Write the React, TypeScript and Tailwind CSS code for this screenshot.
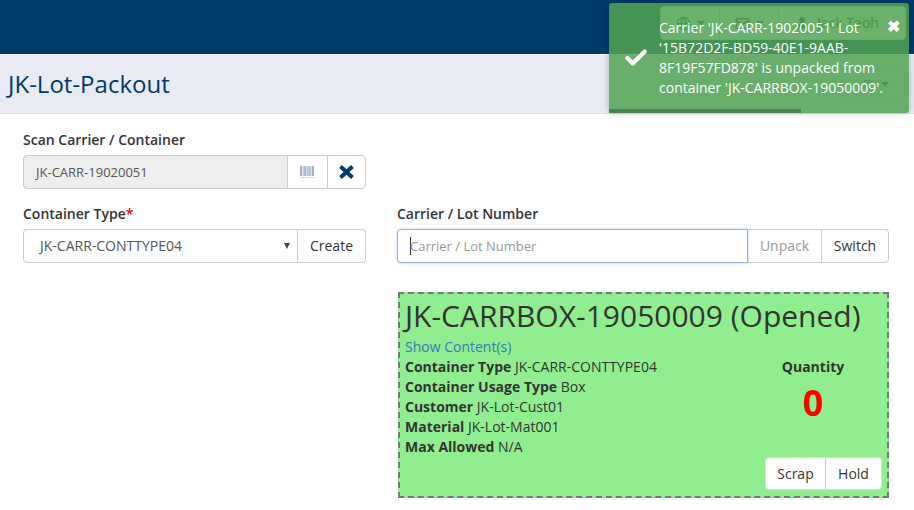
import { Check, Globe, Mail, Users, User } from "lucide-react";

function Row({ k, v }: { k: string; v: string }) {
  return (
    <div className="h-5 leading-5 text-sm">
      <b className="font-bold">{k}</b> {v}
    </div>
  );
}

function Caret() {
  return <span className="inline-block w-0 h-0 border-x-4 border-x-transparent border-t-4 border-t-[#333]" />;
}

export default function App() {
  return (
    <div className="relative w-[914px] h-[510px] overflow-hidden bg-white text-[#333] font-['Open_Sans',sans-serif]">
      <header className="h-[55px] bg-[#003a6b] border-b border-white flex justify-end items-start pt-[6px] pr-[8px]">
        <div className="flex h-[34px] w-[246px] rounded border border-[#ddd] bg-white text-[#333] text-sm">
          <div className="w-[59px] flex items-center justify-center gap-1.5 border-r border-[#ccc]">
            <Globe size={15} className="text-[#0a5a8a]" />
            <Caret />
          </div>
          <div className="w-[59px] flex items-center justify-center gap-1.5 border-r border-[#ccc]">
            <Mail size={15} />
            <Caret />
          </div>
          <div className="flex-1 flex items-center justify-center gap-2 pl-[6px]">
            <User size={14} fill="currentColor" />
            <span>Jack Teoh</span>
            <Caret />
          </div>
        </div>
      </header>
      <div className="h-[59px] bg-[#e8ebf3] border-b border-[#dde0e6] flex items-center justify-between pl-[8px] pr-[9px]">
        <h1 className="text-2xl text-[#003a6b] leading-none">JK-Lot-Packout</h1>
        <div className="w-[60px] h-[33px] rounded border border-[#ccc] flex items-center justify-center gap-2">
          <Users size={11} />
          <Caret />
        </div>
      </div>

      <main className="pl-[23px] pr-[25px] pt-[16px]">
        <label className="block text-sm font-semibold h-5 leading-5 mb-[5px]">Scan Carrier / Container</label>
        <div className="flex w-[343px] h-[34px] text-[13px]">
          <div className="flex-1 flex items-center pl-3 pt-px bg-[#eee] border border-[#ccc] rounded-l text-[#555]">JK-CARR-19020051</div>
          <div className="w-[39px] flex items-center justify-center border-y border-[#ccc]">
            <svg width="15" height="12" viewBox="0 0 15 12" fill="#a3b0c6">
              <rect x="0" width="2" height="10" /><rect x="2.6" width="1" height="10" /><rect x="4.2" width="2" height="10" /><rect x="6.8" width="1" height="10" /><rect x="8.4" width="1.4" height="10" /><rect x="10.4" width="1" height="10" /><rect x="12" width="2" height="10" />
              <rect x="0" y="11" width="14" height="1" fill="#d5dbe5" />
            </svg>
          </div>
          <div className="w-[39px] flex items-center justify-center border border-[#ccc] rounded-r">
            <svg width="15" height="14" viewBox="0 0 15 14" stroke="#003a6b" strokeWidth="4"><path d="M1.5 1.5l12 11M13.5 1.5l-12 11" /></svg>
          </div>
        </div>

        <div className="flex mt-[15px] gap-[31px]">
          <div className="w-[343px]">
            <label className="block text-sm font-semibold h-5 leading-5 mb-[5px]">Container Type<span className="text-[#e00]">*</span></label>
            <div className="flex h-[34px] text-sm">
              <div className="flex-1 relative flex items-center pl-4 border border-[#ccc] rounded-l text-[#555]">
                JK-CARR-CONTTYPE04
                <span className="absolute right-[7px] top-[13px] w-0 h-0 border-x-[3.5px] border-x-transparent border-t-[6px] border-t-[#444]" />
              </div>
              <div className="w-[68px] flex items-center justify-center border-y border-r border-[#ccc] rounded-r">Create</div>
            </div>
          </div>
          <div className="w-[492px]">
            <label className="block text-sm font-semibold h-5 leading-5 mb-[5px]">Carrier / Lot Number</label>
            <div className="flex h-[34px] text-sm">
              <div className="flex-1 flex items-center pl-3 border border-[#8fb4dc] rounded-l shadow-[0_0_3px_rgba(102,175,233,0.5)] text-[13px] text-[#999]">
                <span className="w-px h-[18px] bg-[#333] mr-[-1px]" />
                Carrier / Lot Number
              </div>
              <div className="w-[73px] flex items-center justify-center border-y border-[#ccc] text-[#999]">Unpack</div>
              <div className="w-[68px] flex items-center justify-center border border-[#ccc] rounded-r">Switch</div>
            </div>
          </div>
        </div>

        <section className="ml-[375px] mt-[29px] w-[491px] h-[206px] bg-[#90ee90] border-2 border-dashed border-[#777] pl-[5px] pr-[6px] relative">
          <h2 className="text-[30px] leading-[42px] mt-[1px] whitespace-nowrap">JK-CARRBOX-19050009 (Opened)</h2>
          <div className="flex">
            <div className="flex-1">
              <div className="h-5 leading-5 text-sm text-[#337ab7]">Show Content(s)</div>
              <Row k="Container Type" v="JK-CARR-CONTTYPE04" />
              <Row k="Container Usage Type" v="Box" />
              <Row k="Customer" v="JK-Lot-Cust01" />
              <Row k="Material" v="JK-Lot-Mat001" />
              <Row k="Max Allowed" v="N/A" />
            </div>
            <div className="w-[118px] mr-[9px] pt-[20px] text-center">
              <div className="text-sm font-bold leading-5">Quantity</div>
              <div className="text-4xl font-bold text-[#f00] leading-10 mt-[6px]">0</div>
            </div>
          </div>
          <div className="absolute right-[5px] bottom-[6px] flex h-[33px] bg-white rounded border border-[#ddd] text-sm">
            <div className="w-[60px] flex items-center justify-center border-r border-[#ccc]">Scrap</div>
            <div className="w-[55px] flex items-center justify-center">Hold</div>
          </div>
        </section>
      </main>

      <div className="absolute left-[609px] top-[3px] w-[300px] h-[110px] rounded-[3px] bg-[#51a351]/85 shadow-[0_0_6px_rgba(0,0,0,0.25)] text-white text-sm leading-5 pl-[50px] pr-[20px] pt-[15px]">
        <Check size={26} strokeWidth={4} className="absolute left-[14px] top-[42px]" />
        <span className="absolute right-[9px] top-[13px] font-bold text-base leading-5">✖</span>
        <div>Carrier 'JK-CARR-19020051' Lot '15B72D2F-BD59-40E1-9AAB-8F19F57FD878' is unpacked from container 'JK-CARRBOX-19050009'.</div>
        <div className="absolute left-0 bottom-0 h-1 w-[192px] bg-[#4d8054]" />
      </div>
    </div>
  );
}
